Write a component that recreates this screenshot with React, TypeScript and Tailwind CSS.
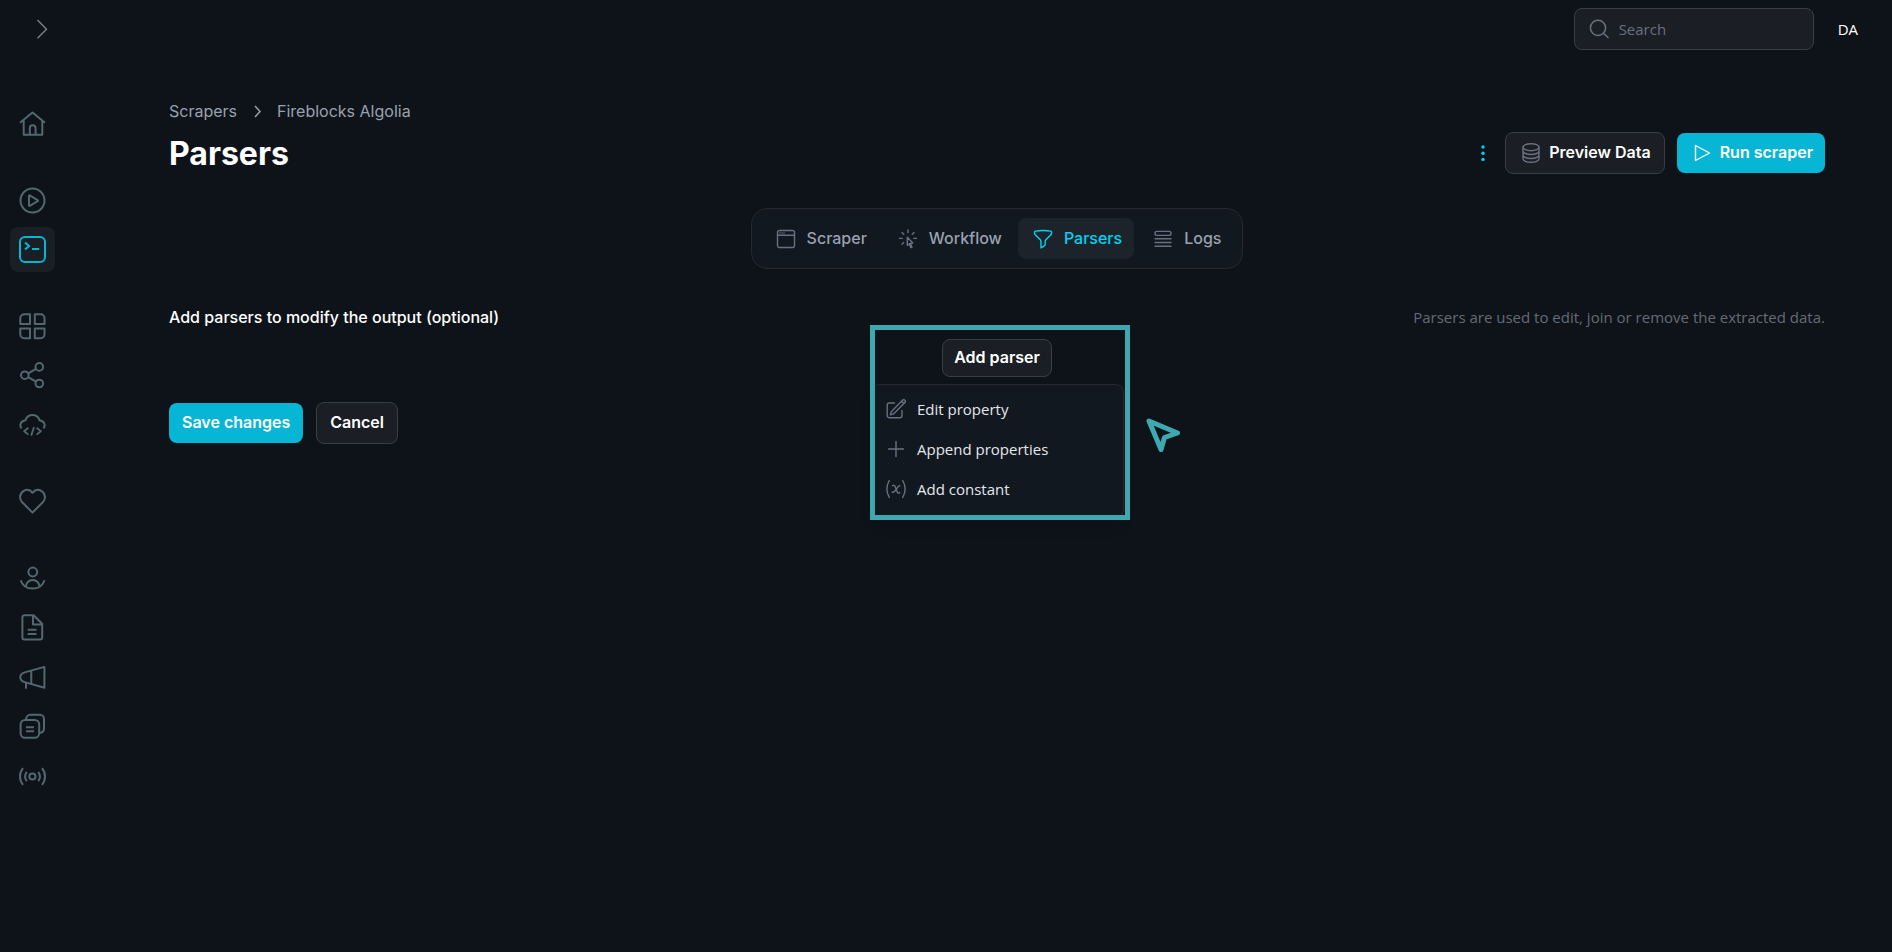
import { ReactNode, useState } from "react";

interface IconProps {
  className?: string;
  children?: ReactNode;
}

interface NavItem {
  label: string;
  icon: ReactNode;
}

const NavIcon = ({ children }: IconProps) => (
  <svg
    className="w-[27px] h-[27px]"
    viewBox="0 0 27 27"
    fill="none"
    stroke="currentColor"
    strokeWidth="2"
    strokeLinejoin="round"
    aria-hidden="true"
  >
    {children}
  </svg>
);

const SmallIcon = ({ className, children }: IconProps) => (
  <svg
    className={`w-5 h-5 shrink-0 ${className ?? ""}`}
    viewBox="0 0 20 20"
    fill="none"
    stroke="currentColor"
    strokeWidth="1.4"
    strokeLinecap="round"
    strokeLinejoin="round"
    aria-hidden="true"
  >
    {children}
  </svg>
);

const navGroups: NavItem[][] = [
  [
    {
      label: "Home",
      icon: (
        <NavIcon>
          <path d="M1 12.8 13.5 2.5 26 12.8M4.7 10.5v14.2h18.6V10.5M10.8 24.5v-6.3a2.9 2.9 0 0 1 5.8 0v6.3" />
        </NavIcon>
      ),
    },
  ],
  [
    {
      label: "Runs",
      icon: (
        <NavIcon>
          <circle cx="13.5" cy="13.5" r="12" />
          <path d="M10 8.8v9.6a.5.5 0 0 0 .8.4l7.8-4.6a.6.6 0 0 0 0-1.1l-7.8-4.7a.5.5 0 0 0-.8.4Z" />
        </NavIcon>
      ),
    },
    {
      label: "Scrapers",
      icon: (
        <NavIcon>
          <rect x="1" y="1" width="25" height="25" rx="5" />
          <path d="m6 6.6 4.2 3.4L6 13.4M13 13h7.2" />
        </NavIcon>
      ),
    },
  ],
  [
    {
      label: "Apps",
      icon: (
        <NavIcon>
          <path d="M11 1.2v9.8H1.3V5.2a4 4 0 0 1 4-4ZM15.8 1.2v9.8h9.7V5.2a4 4 0 0 0-4-4ZM11 25.3v-9.8H1.3v5.8a4 4 0 0 0 4 4ZM15.8 25.3v-9.8h9.7v5.8a4 4 0 0 1-4 4Z" />
        </NavIcon>
      ),
    },
    {
      label: "Integrations",
      icon: (
        <NavIcon>
          <circle cx="20.3" cy="4.9" r="3.8" />
          <circle cx="5.8" cy="13.2" r="3.8" />
          <circle cx="20.3" cy="21.5" r="3.8" />
          <path d="m9.2 11.3 7.8-4.5M9.2 15.2l7.8 4.4" />
        </NavIcon>
      ),
    },
    {
      label: "API",
      icon: (
        <NavIcon>
          <path d="M2.4 17.6C.2 14 1.6 10.2 6.4 9.3 7.6 5.9 10.2 4 13.5 4s5.900 1.900 7.100 5.300c4.800.9 6.200 4.700 4 8.300" />
          <path d="m9.400 16.800-4.300 3.400 4.300 3.400M17.600 16.800l4.300 3.400-4.300 3.400M15 16l-2.800 8.600" strokeWidth="1.800" />
        </NavIcon>
      ),
    },
  ],
  [
    {
      label: "Favorites",
      icon: (
        <NavIcon>
          <path d="M13.5 24.6 3.2 14.2C-.3 10.7.8 5 4.8 2.8c3-1.6 6.4-.9 8.7 2 2.3-2.9 5.7-3.6 8.7-2 4 2.2 5.1 7.9 1.6 11.4Z" />
        </NavIcon>
      ),
    },
  ],
  [
    {
      label: "Account",
      icon: (
        <NavIcon>
          <circle cx="13.8" cy="7" r="4.4" />
          <path d="M1.7 15.2c1.6 5.1 6.2 8.4 11.9 8.4s10.4-3.3 11.9-8.4M6.7 21.8c.7-4.4 3.4-6.9 7-6.9s6.3 2.5 7 6.9" />
        </NavIcon>
      ),
    },
    {
      label: "Documentation",
      icon: (
        <NavIcon>
          <path d="M5.4 1.2h9.2l8.6 8.6v13.8a2 2 0 0 1-2 2H5.4a2 2 0 0 1-2-2V3.2a2 2 0 0 1 2-2ZM14 1.2v9.2h9.2M8.7 15.8h8.8M8.7 20h8.8" />
        </NavIcon>
      ),
    },
    {
      label: "Announcements",
      icon: (
        <NavIcon>
          <path d="M25.4 3.9v20.8L6.5 19.4c-3.4-.8-5.2-2.6-5.2-5.2s1.8-4.2 5.2-5.1ZM12.3 7.6v13.2M7 19.4v6.4" />
        </NavIcon>
      ),
    },
    {
      label: "Templates",
      icon: (
        <NavIcon>
          <rect x="1.6" y="8" width="18.6" height="17.8" rx="4.5" />
          <path d="M7.2 8V6.9a4.2 4.2 0 0 1 4.2-4.2h9.4A4.2 4.2 0 0 1 25 6.9v9.4a4.2 4.2 0 0 1-4.8 4.5M7 15.2h8M7 19.2h8" />
        </NavIcon>
      ),
    },
    {
      label: "Status",
      icon: (
        <NavIcon>
          <circle cx="13.4" cy="15.5" r="3.1" />
          <path d="M4 7.2c-4 4.7-4 11.9 0 16.6M23 7.2c4 4.7 4 11.9 0 16.6M7.8 10.8c-2 2.8-2 6.6 0 9.4M19.2 10.8c2 2.8 2 6.6 0 9.4" />
        </NavIcon>
      ),
    },
  ],
];

const tabs: NavItem[] = [
  {
    label: "Scraper",
    icon: (
      <SmallIcon>
        <rect x="1.5" y="1.5" width="17" height="17" rx="2" />
        <path d="M1.5 6.3h17M4 4h.1M6 4h.1M8 4h.1" />
      </SmallIcon>
    ),
  },
  {
    label: "Workflow",
    icon: (
      <SmallIcon>
        <path d="M10 1v2.6M4 3.6l1.7 1.7M16 3.6l-1.7 1.7M1.6 9.4h2.6M15.8 9.4h2.6M4 15.2l1.7-1.7M9.3 8.2v8.2l2-1.7 1.5 4 1.2-.5-1.6-3.8 2.4-.3Z" />
      </SmallIcon>
    ),
  },
  {
    label: "Parsers",
    icon: (
      <SmallIcon>
        <path d="M10 1.5c2.6 0 5.2.2 7.6.6.6.1 1 .5 1 1v1a2.5 2.5 0 0 1-.7 1.6l-5 5a2.5 2.5 0 0 0-.7 1.7v2.7a2.2 2.2 0 0 1-1.2 2L8 18.8v-6.4a2.5 2.5 0 0 0-.7-1.7l-5.1-5a2.5 2.5 0 0 1-.7-1.6v-1c0-.5.4-.9 1-1 2.4-.4 4.9-.6 7.5-.6Z" />
      </SmallIcon>
    ),
  },
  {
    label: "Logs",
    icon: (
      <SmallIcon>
        <rect x="2" y="2.4" width="16" height="4" rx="1.8" />
        <path d="M2 9.7h16M2 13.5h16M2 17.3h16" />
      </SmallIcon>
    ),
  },
];

const menuItems: NavItem[] = [
  {
    label: "Edit property",
    icon: (
      <SmallIcon>
        <path d="m15.5 2.2 1-1a1.7 1.7 0 0 1 2.4 2.4L8.3 14.2a4 4 0 0 1-1.7 1l-2.3.7.7-2.3a4 4 0 0 1 1-1.700Zm0 0 2.3 2.4M16 11.500v5.200a2 2 0 0 1-2 2H3.200a2 2 0 0 1-2-2V6a2 2 0 0 1 2-2h5.300" />
      </SmallIcon>
    ),
  },
  {
    label: "Append properties",
    icon: (
      <SmallIcon>
        <path d="M10 2.5v15M2.5 10h15" />
      </SmallIcon>
    ),
  },
  {
    label: "Add constant",
    icon: (
      <SmallIcon>
        <path d="M3.300 1.500c-3 5.200-3 11.800 0 17M16.700 1.500c3 5.200 3 11.800 0 17M6.500 6.700c1-.7 2-.5 2.500.6l2.200 5.600c.5 1.200 1.500 1.500 2.500.7M13.800 6.800c-2.500-.8-3.300 6.300-7.500 6.500" />
      </SmallIcon>
    ),
  },
];

const darkButton =
  "flex items-center justify-center rounded-lg border border-[#3a3d42] bg-[#1b1f25] font-semibold text-white";
const cyanButton =
  "flex items-center justify-center rounded-lg bg-[#06b6d4] font-semibold text-white h-10";

const Sidebar = () => (
  <nav aria-label="Main" className="flex flex-col gap-8 w-[65px] shrink-0 items-center pt-[43px]">
    {navGroups.map((group, i) => (
      <div key={i} className="flex flex-col gap-1">
        {group.map((item) => (
          <a
            key={item.label}
            href="#"
            aria-label={item.label}
            className={`flex w-[45px] h-[45px] items-center justify-center rounded-lg ${
              item.label === "Scrapers" ? "bg-[#1a1f25] text-[#06b6d4]" : "text-[#54666f]"
            }`}
          >
            {item.icon}
          </a>
        ))}
      </div>
    ))}
  </nav>
);

const TopBar = () => (
  <header className="flex h-[58px] items-center justify-between pl-8 pr-[34px]">
    <button type="button" aria-label="Expand sidebar" className="text-[#7b808c]">
      <svg className="w-5 h-5" viewBox="0 0 20 20" fill="none" stroke="currentColor" strokeWidth="1.4" aria-hidden="true">
        <path d="m5.5 1 9 9.3-9 9" />
      </svg>
    </button>
    <div className="flex items-center gap-6">
      <label className="flex h-[42px] w-60 items-center gap-2.5 rounded-lg border border-[#3a3d42] bg-[#1b1f25] px-3.5 text-[#6b7080]">
        <svg className="w-5 h-5 shrink-0" viewBox="0 0 20 20" fill="none" stroke="currentColor" strokeWidth="1.5" strokeLinecap="round" aria-hidden="true">
          <circle cx="9" cy="8.8" r="7.6" />
          <path d="m14.5 14.3 4.5 4.2" />
        </svg>
        <input
          type="search"
          aria-label="Search"
          placeholder="Search"
          className="w-full bg-transparent font-['Open_Sans',sans-serif] text-[15px] outline-none placeholder:text-[#6b7080]"
        />
      </label>
      <button type="button" className="font-['Open_Sans',sans-serif] text-[15px] text-white">DA</button>
    </div>
  </header>
);

const AddParser = () => {
  const [open, setOpen] = useState(true);

  return (
    <div className="relative mt-[10px] self-center">
      <button
        type="button"
        aria-expanded={open}
        onClick={() => setOpen(!open)}
        className={`${darkButton} h-[38px] px-[11px] pb-0.5`}
      >
        Add parser
      </button>
      {open && (
        <>
          <div className="absolute left-1/2 top-[45px] -ml-[126px] w-[253px] rounded-lg border border-[#25292f] bg-[#111820] pt-1 pb-2 shadow-lg">
            {menuItems.map((item) => (
              <button
                key={item.label}
                type="button"
                className="flex h-10 w-full items-center gap-[11px] pl-3.5 font-['Open_Sans',sans-serif] text-[15px] text-gray-200"
              >
                <span className="text-[#6b7080]">{item.icon}</span>
                {item.label}
              </button>
            ))}
          </div>
          <div className="pointer-events-none absolute left-1/2 -top-3.5 -ml-[127px] h-[195px] w-[260px] border-[5px] border-[#3ea8b1]" />
          <svg
            className="pointer-events-none absolute -right-[129px] top-[78px] w-9 h-9"
            viewBox="0 0 36 36"
            fill="none"
            stroke="#3ea8b1"
            strokeWidth="5"
            strokeLinejoin="round"
            aria-hidden="true"
          >
            <path d="M4 4 32.5 16 19.5 20.5 16 32.5Z" />
          </svg>
        </>
      )}
    </div>
  );
};

const App = () => {
  const [active, setActive] = useState("Parsers");

  return (
    <div className="min-h-screen bg-[#0e1319] font-[Inter,sans-serif] text-base text-white">
      <TopBar />
      <div className="flex">
        <Sidebar />
        <main className="flex grow flex-col pl-[104px] pr-[67px] pt-[41px]">
          <div className="flex items-end justify-between">
            <div>
              <nav aria-label="Breadcrumb" className="flex items-center gap-3 text-[#9aa1ae]">
                <a href="#">Scrapers</a>
                <svg className="w-4 h-4" viewBox="0 0 16 16" fill="none" stroke="currentColor" strokeWidth="1.5" aria-hidden="true">
                  <path d="m6 3 5 5.5-5 5.5" />
                </svg>
                <a href="#">Fireblocks Algolia</a>
              </nav>
              <h1 className="mt-[11px] text-[32px] leading-10 font-bold">Parsers</h1>
            </div>
            <div className="flex items-center gap-3">
              <button type="button" aria-label="More actions" className="w-5 text-cyan-400">
                <svg className="w-5 h-5" viewBox="0 0 20 20" fill="currentColor" aria-hidden="true">
                  <circle cx="10" cy="4" r="1.7" />
                  <circle cx="10" cy="10.2" r="1.7" />
                  <circle cx="10" cy="16.4" r="1.7" />
                </svg>
              </button>
              <button type="button" className={`${darkButton} h-[42px] gap-2 pl-[15px] pr-[13px]`}>
                <SmallIcon className="text-[#6b7080]">
                  <ellipse cx="10" cy="4.2" rx="8" ry="3.5" />
                  <path d="M2 4.2v11.600c0 2 3.600 3.500 8 3.500s8-1.500 8-3.500V4.200M2 8c0 2 3.600 3.500 8 3.500S18 10 18 8M2 12c0 2 3.600 3.500 8 3.500s8-1.500 8-3.500" />
                </SmallIcon>
                <span className="pb-0.5">Preview Data</span>
              </button>
              <button type="button" className={`${cyanButton} gap-2 pl-[15px] pr-3`}>
                <SmallIcon>
                  <path d="M3.500 2.500v15L17.500 10Z" />
                </SmallIcon>
                <span className="pb-0.5">Run scraper</span>
              </button>
            </div>
          </div>

          <div role="tablist" className="mt-[34px] flex gap-1 self-center rounded-2xl border border-[#25292f] bg-[#111820] p-[9px]">
            {tabs.map((tab) => (
              <button
                key={tab.label}
                type="button"
                role="tab"
                aria-selected={active === tab.label}
                onClick={() => setActive(tab.label)}
                className={`flex h-[41px] items-center gap-[11px] rounded-lg pl-[15px] pr-3 font-medium ${
                  active === tab.label ? "bg-[#1c232b] text-cyan-400" : "text-[#9aa1ae]"
                }`}
              >
                <span className={active === tab.label ? "text-cyan-400" : "text-[#6b7080]"}>{tab.icon}</span>
                <span className="pb-0.5">{tab.label}</span>
              </button>
            ))}
          </div>

          <div className="mt-9 flex items-center justify-between">
            <h2 className="font-medium">Add parsers to modify the output (optional)</h2>
            <p className="font-['Open_Sans',sans-serif] text-[15px] text-[#656a76]">
              Parsers are used to edit, join or remove the extracted data.
            </p>
          </div>

          <AddParser />

          <div className="mt-[25px] flex items-center gap-[13px]">
            <button type="button" className={`${cyanButton} px-[13px] pb-0.5`}>
              Save changes
            </button>
            <button type="button" className={`${darkButton} h-[42px] px-[13px] pb-0.5`}>
              Cancel
            </button>
          </div>
        </main>
      </div>
    </div>
  );
};

export default App;
